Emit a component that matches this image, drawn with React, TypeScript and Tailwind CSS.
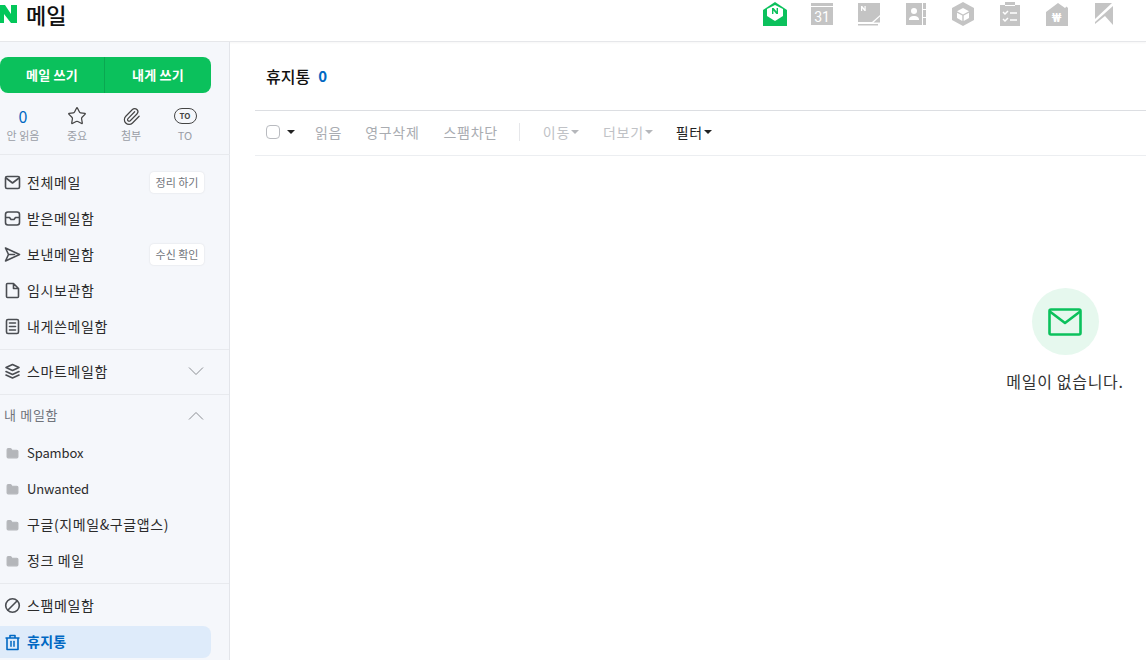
import type { ReactNode } from "react";
import { Folder, Paperclip, Star } from "lucide-react";

const font = "font-['Noto_Sans_CJK_KR','Noto_Sans',sans-serif]";

function AppIcons() {
  return (
    <div className="flex items-center gap-[23px] pr-[30px]">
      <svg width="24" height="24" viewBox="0 0 24 24">
        <path d="M0 8 12 0l12 8v16H0z" fill="#0bc15c" />
        <path d="M4 7 12 3l8 4v7l-8 5-8-5z" fill="#fff" />
        <path d="M9 6v6h1.400V8.600L13.300 12H15V6h-1.400v3.400L10.700 6z" fill="#0bc15c" />
      </svg>
      <svg width="24" height="24" viewBox="0 0 24 24">
        <path d="M1 1h22v3H1zM1 5h22v18H1z" fill="#c4c4c4" />
        <text x="12" y="20" textAnchor="middle" fontSize="14" fill="#fff" fontFamily="Roboto">31</text>
      </svg>
      <svg width="24" height="24" viewBox="0 0 24 24">
        <path d="M1 1h22v12l-8 7H1z" fill="#c4c4c4" />
        <path d="M23 14.500 16.500 20.500H23z" fill="#c4c4c4" />
        <path d="M1 22h20v1.500H1z" fill="#c4c4c4" />
        <path d="M4 4v5h1.200V6.300L7.500 9h1.200V4H7.500v2.700L5.200 4z" fill="#fff" />
      </svg>
      <svg width="24" height="24" viewBox="0 0 24 24">
        <path d="M2 1h16v22H2zM19 1h3v6h-3zM19 8h3v7h-3zM19 16h3v7h-3z" fill="#c4c4c4" />
        <circle cx="10" cy="9" r="3" fill="#fff" />
        <path d="M5 18c0-3 2-4 5-4s5 1 5 4z" fill="#fff" />
      </svg>
      <svg width="24" height="24" viewBox="0 0 24 24">
        <path d="M12 0 23 6v12l-11 6L1 18V6z" fill="#c4c4c4" />
        <path d="M12 6l6 3.200-6 3.200-6-3.200zM6 10.800l5.300 2.800V19L6 16zM18 10.800l-5.300 2.800V19l5.300-3z" fill="#fff" />
      </svg>
      <svg width="24" height="24" viewBox="0 0 24 24">
        <path d="M2 3h5V0h10v3h5v21H2z" fill="#c4c4c4" />
        <path d="M7 3.500h10" fill="none" stroke="#fff" />
        <path d="m5 10 2 2 3-3M5 17l2 2 3-3M12 11h7M12 18h7" fill="none" stroke="#fff" strokeWidth="1.500" />
      </svg>
      <svg width="24" height="24" viewBox="0 0 24 24">
        <path d="M1 10 13 1l7 5 3-3v21H1z" fill="#c4c4c4" />
        <path d="M18 1h6v6z" fill="#fff" />
        <text x="11.500" y="20" textAnchor="middle" fontSize="12" fontWeight="700" fill="#fff" fontFamily="Roboto">₩</text>
      </svg>
      <svg width="24" height="24" viewBox="0 0 24 24">
        <path d="M3 1h17L3 17z" fill="#c4c4c4" />
        <path d="M3 22v-2L21 4v19l-8-9z" fill="#c4c4c4" />
      </svg>
    </div>
  );
}

function NavIcon({ children }: { children: ReactNode }) {
  return (
    <svg width="17" height="17" viewBox="0 0 17 17" fill="none" stroke="#4a4d52" strokeWidth="1.600" strokeLinejoin="round" strokeLinecap="round">
      {children}
    </svg>
  );
}

function Stat({ top, label }: { top: ReactNode; label: string }) {
  return (
    <div className="flex w-[54px] flex-col items-center">
      <div className="flex h-[20px] items-center">{top}</div>
      <span className="mt-[2px] text-[11px] leading-[14px] text-[#9a9ea6]">{label}</span>
    </div>
  );
}

function NavRow({ icon, label, tag }: { icon: ReactNode; label: string; tag?: string }) {
  return (
    <div className="flex h-[36px] items-center pl-[4px] pr-[25px]">
      <span className="flex w-[17px] justify-center">{icon}</span>
      <span className="ml-[6px] flex-1 text-[14px] tracking-[0.6px] text-[#2b2b2b]">{label}</span>
      {tag && <span className="flex h-[21px] w-[54px] items-center justify-center rounded-[4px] bg-white text-[11px] text-[#70747b] shadow-[0_0_2px_rgba(0,0,0,0.12)]">{tag}</span>}
    </div>
  );
}

function FolderRow({ label, latin }: { label: string; latin?: boolean }) {
  return (
    <div className="flex h-[36px] items-center pl-[6px]">
      <Folder size={13} className="fill-[#b4b6ba] text-[#b4b6ba]" />
      <span className={latin ? "ml-[8px] text-[13px] tracking-[-0.1px] text-[#2b2b2b]" : "ml-[8px] pb-[2px] text-[14px] tracking-[0.6px] text-[#2b2b2b]"}>{label}</span>
    </div>
  );
}

function Chevron({ up }: { up?: boolean }) {
  return (
    <svg width="16" height="9" viewBox="0 0 16 9" fill="none" stroke="#8a8d92">
      <path d={up ? "M1 8.500 8 1.500l7 7" : "M1 .5l7 7 7-7"} />
    </svg>
  );
}

function Caret({ muted }: { muted?: boolean }) {
  return <span className={"ml-[1px] inline-block h-0 w-0 border-x-[4px] border-t-[4px] border-x-transparent " + (muted ? "border-t-[#b5b7bb]" : "border-t-[#222]")} />;
}

export default function App() {
  return (
    <div className={"flex h-[660px] w-[1146px] flex-col overflow-hidden bg-white " + font}>
      <header className="flex h-[42px] shrink-0 items-center justify-between border-b border-[#e6e7ea] pb-[14px] shadow-[0_1px_2px_rgba(0,0,0,0.04)]">
        <div className="flex items-center">
          <svg width="17" height="18" viewBox="0 0 17 18">
            <path d="M-2 0h7l6 9V0h6v18h-6L4 9v9h-6z" fill="#03c75a" />
          </svg>
          <span className="ml-[9px] text-[22px] leading-[24px] font-medium text-[#111]">메일</span>
        </div>
        <AppIcons />
      </header>
      <div className="flex min-h-0 flex-1">
        <aside className="w-[230px] shrink-0 border-r border-[#e3e5ea] bg-[#f5f7fb]">
          <div className="pt-[15px] pr-[18px]">
            <div className="flex h-[36px] items-center rounded-lg bg-[#0bc15c] text-[13px] font-bold tracking-[0.2px] text-white">
              <span className="flex h-full w-[105px] items-center justify-center border-r border-[#0aa851]">메일 쓰기</span>
              <span className="flex-1 text-center">내게 쓰기</span>
            </div>
          </div>
          <div className="-ml-[4px] flex h-[62px] w-[234px] items-start border-b border-[#e8eaee] pt-[13px]">
            <Stat top={<span className="text-[16px] text-[#0068c3]">0</span>} label="안 읽음" />
            <Stat top={<Star size={20} strokeWidth={1.500} className="text-[#444]" />} label="중요" />
            <Stat top={<Paperclip size={19} strokeWidth={1.500} className="text-[#444]" />} label="첨부" />
            <Stat
              top={
                <span className="flex h-[16px] w-[23px] items-center justify-center rounded-full border-[1.500px] border-[#444] text-[8px] font-bold text-[#444]">TO</span>
              }
              label="TO"
            />
          </div>
          <div className="border-b border-[#e8eaee] pt-[9px] pb-[5px]">
            <NavRow
              icon={<NavIcon><rect x="1.500" y="2.500" width="14" height="12" rx="1.500" /><path d="M2 4l6.500 5L15 4" /></NavIcon>}
              label="전체메일"
              tag="정리 하기"
            />
            <NavRow
              icon={<NavIcon><rect x="1.500" y="2" width="14" height="13" rx="2.500" /><path d="M2 7.500h3.500l1.500 2h3l1.500-2H15" /></NavIcon>}
              label="받은메일함"
            />
            <NavRow icon={<NavIcon><path d="M1.500 2 15.500 8.500 1.500 15 4.500 8.500zM4.500 8.500h6" /></NavIcon>} label="보낸메일함" tag="수신 확인" />
            <NavRow icon={<NavIcon><path d="M2.500 2.500a1 1 0 0 1 1-1h6l5 5v8a1 1 0 0 1-1 1h-10a1 1 0 0 1-1-1zM9.500 1.500v5h5" /></NavIcon>} label="임시보관함" />
            <NavRow
              icon={<NavIcon><rect x="2.500" y="1.500" width="12" height="14" rx="1.500" /><path d="M5.500 5h6M5.500 8.500h6M5.500 12h6" /></NavIcon>}
              label="내게쓴메일함"
            />
          </div>
          <div className="flex h-[45px] items-center border-b border-[#e8eaee] pr-[25px] pb-[2px] pl-[4px]">
            <NavIcon><path d="M8.500 1.500 15 4.500 8.500 7.500 2 4.500zM2 8.500l6.500 3 6.500-3M2 12l6.500 3 6.500-3" /></NavIcon>
            <span className="ml-[6px] flex-1 text-[14px] tracking-[0.6px] text-[#2b2b2b]">스마트메일함</span>
            <Chevron />
          </div>
          <div className="flex h-[40px] items-center pr-[25px] pl-[4px]">
            <span className="flex-1 text-[13px] tracking-[0.7px] text-[#70747b]">내 메일함</span>
            <Chevron up />
          </div>
          <div className="border-b border-[#e8eaee] pb-[4px]">
            <FolderRow label="Spambox" latin />
            <FolderRow label="Unwanted" latin />
            <FolderRow label="구글(지메일&구글앱스)" />
            <FolderRow label="정크 메일" />
          </div>
          <div className="pt-[3px]">
            <NavRow icon={<NavIcon><circle cx="8.500" cy="8.500" r="6.800" /><path d="M4 13 13 4" /></NavIcon>} label="스팸메일함" />
            <div className="mt-[3px] mr-[18px] flex h-[32px] items-center rounded-r-lg bg-[#deebfa] pl-[4px]">
              <svg width="17" height="17" viewBox="0 0 17 17" fill="none" stroke="#0068c3" strokeWidth="1.600" strokeLinejoin="round">
                <path d="M1.500 4h14M6 4V1.500h5V4M3 4v11.500h11V4" />
                <path d="M6.500 7v5.500h1V7zM9.500 7v5.500h1V7z" fill="#0068c3" strokeWidth="0.500" />
              </svg>
              <span className="ml-[6px] pb-[2px] text-[14px] font-bold tracking-[0.3px] text-[#0068c3]">휴지통</span>
            </div>
          </div>
        </aside>
        <main className="w-[1645px] shrink-0 pl-[25px]">
          <div className="flex h-[69px] items-center border-b border-[#dcdee2] pl-[11px]">
            <span className="text-[16px] font-medium text-[#111]">휴지통</span>
            <span className="ml-[8px] text-[15px] font-bold text-[#0068c3]">0</span>
          </div>
          <div className="flex h-[45px] items-center border-b border-[#eceef1] pb-[2px] pl-[11px] text-[14px] tracking-[0.7px] text-[#a9acb1]">
            <span className="h-[14px] w-[14px] rounded-[4px] border border-[#b9bbc0]" />
            <span className="ml-[6px] flex items-center"><Caret /></span>
            <span className="ml-[20px]">읽음</span>
            <span className="ml-[23px]">영구삭제</span>
            <span className="ml-[24px]">스팸차단</span>
            <span className="mr-[23px] ml-[21px] h-[18px] w-px bg-[#e6e7ea]" />
            <span className="flex items-center text-[#c0c2c6]">이동<Caret muted /></span>
            <span className="ml-[24px] flex items-center text-[#c0c2c6]">더보기<Caret muted /></span>
            <span className="ml-[23px] flex items-center text-[#222]">필터<Caret /></span>
          </div>
          <div className="flex flex-col items-center pt-[132px]">
            <div className="flex h-[67px] w-[67px] items-center justify-center rounded-full bg-[#e6f8ee]">
              <svg width="34" height="28" viewBox="0 0 34 28" fill="none" stroke="#0bc15c" strokeWidth="2.600" strokeLinejoin="round" strokeLinecap="round">
                <rect x="1.500" y="1.500" width="31" height="25" rx="1.500" />
                <path d="M2.500 4 17 15 31.500 4" />
              </svg>
            </div>
            <p className="mt-[14px] text-[16px] tracking-[0.7px] text-[#333]">메일이 없습니다.</p>
          </div>
        </main>
      </div>
    </div>
  );
}
